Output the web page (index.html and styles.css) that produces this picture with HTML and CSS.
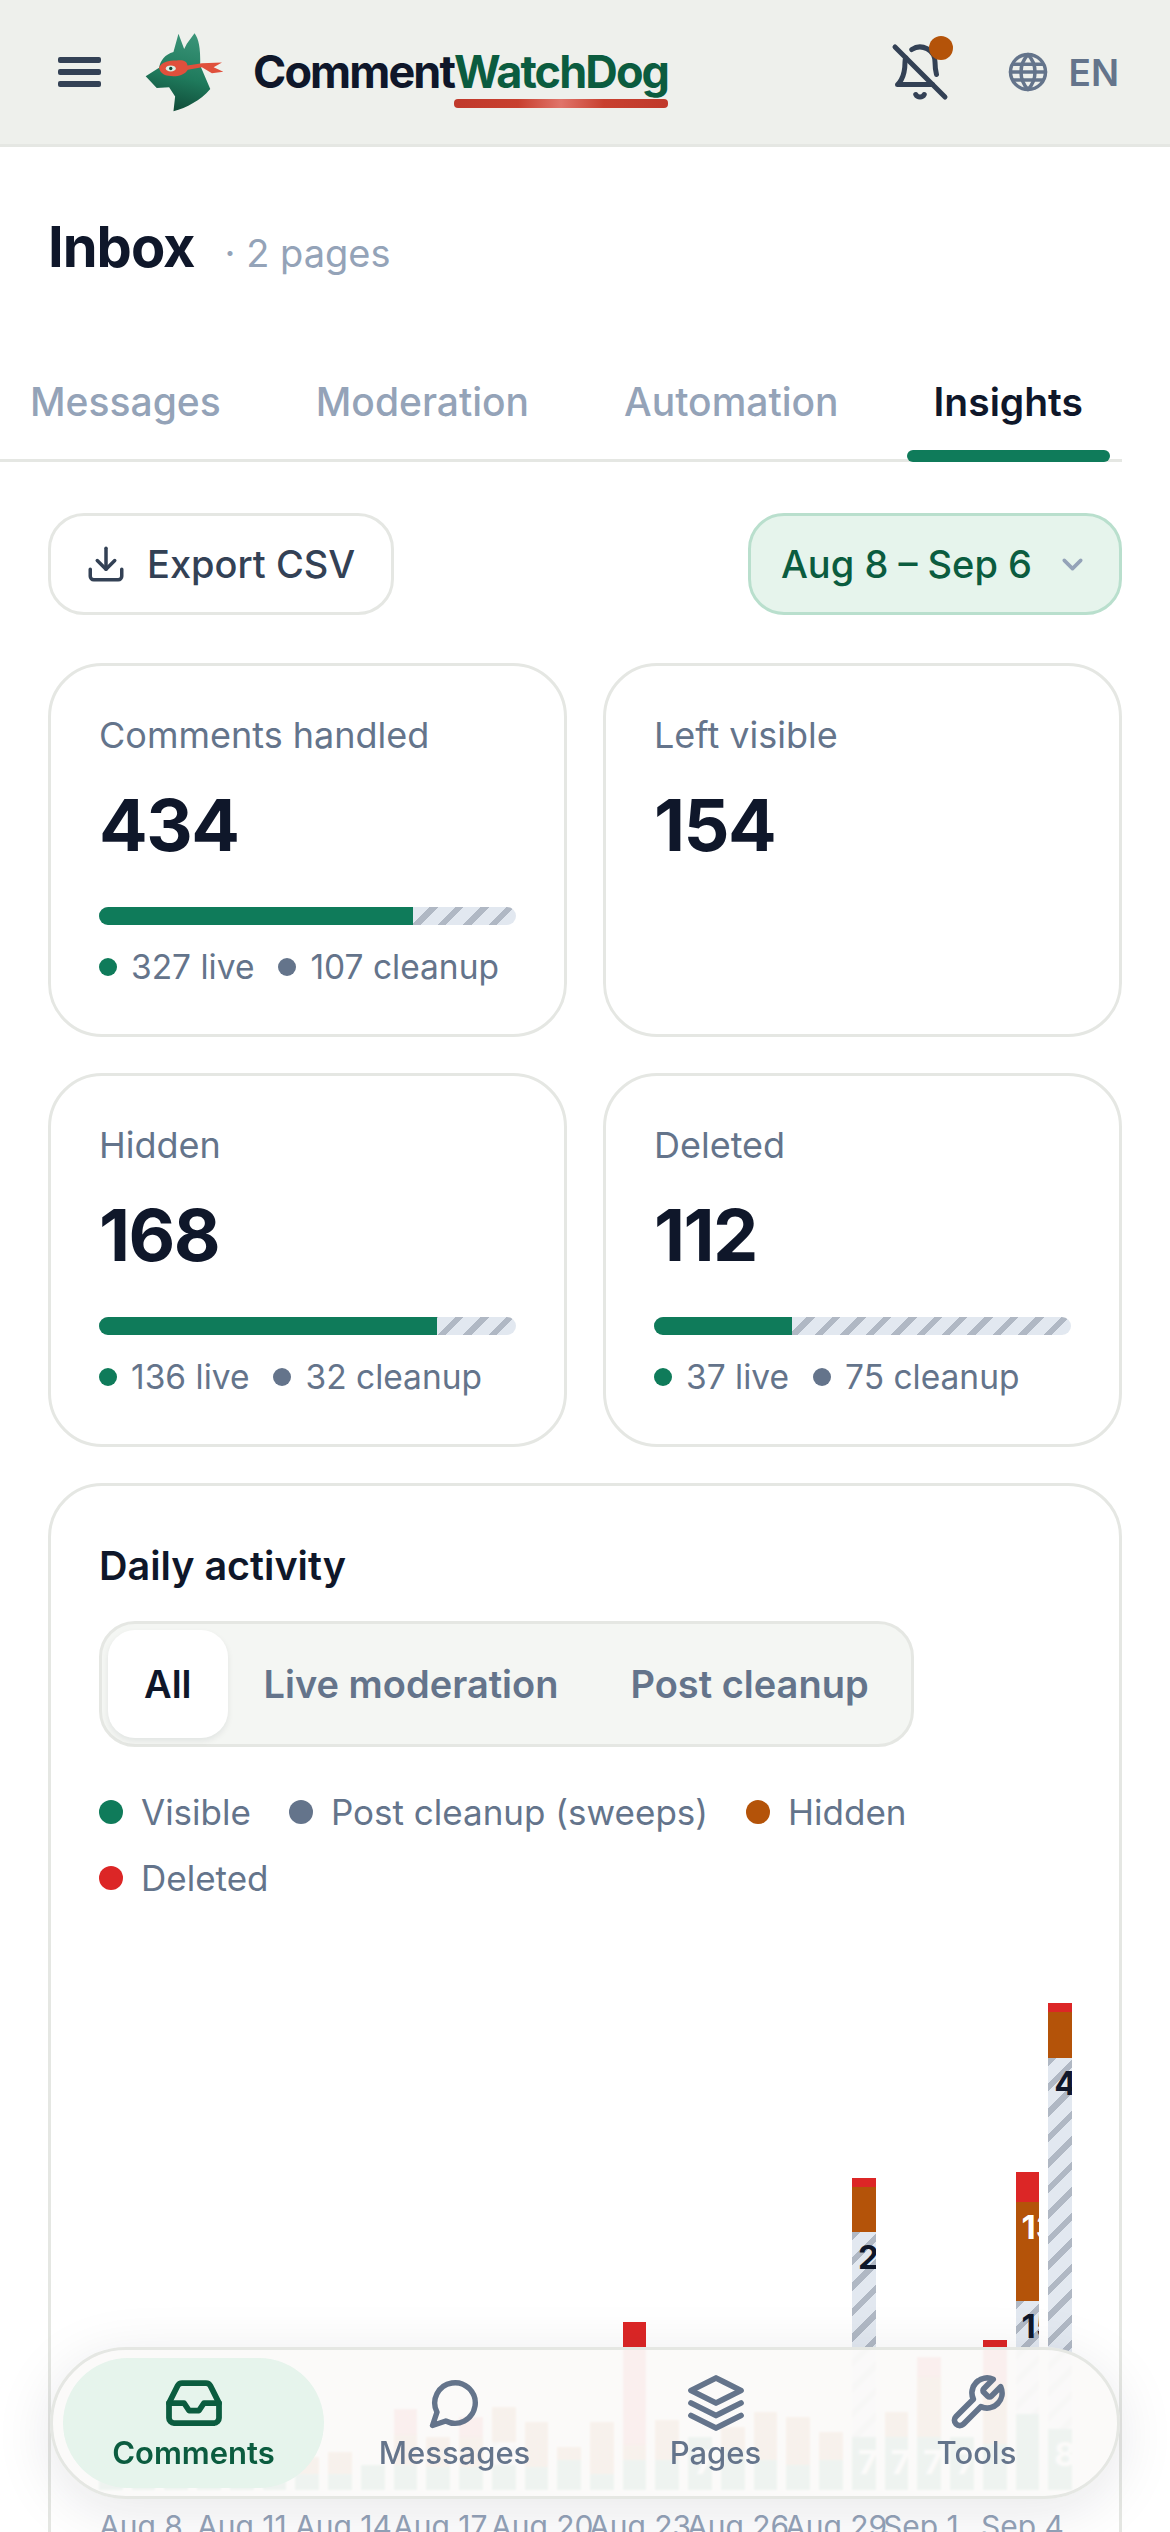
FILE: index.html
```html
<!DOCTYPE html>
<html lang="en">
<head>
    <meta charset="UTF-8">
    <title>CommentWatchDog - Inbox</title>
    <link rel="stylesheet" href="styles.css">
</head>
<body>
<header class="topbar">
    <button class="burger" aria-label="Menu"><span></span><span></span><span></span></button>
    <svg class="dog" viewBox="80 68 236 236">
        <defs>
            <linearGradient id="fur" x1="0.6" y1="0" x2="0.4" y2="1">
                <stop offset="0" stop-color="#3a9478"/>
                <stop offset="0.55" stop-color="#1f7a5c"/>
                <stop offset="1" stop-color="#0f4a37"/>
            </linearGradient>
        </defs>
        <path fill="url(#fur)" d="M165 125 L180 70 L197 116 L205 100 L228 69 C240 85 246 110 245 165 L275 235 C245 270 205 290 165 302 L170 258 L152 230 L115 232 L82 197 L122 172 C126 150 140 132 165 125Z"/>
        <path fill="#e0503c" d="M122 172 C128 155 150 150 175 150 C195 148 205 152 207 165 L250 158 L310 156 L285 170 L314 184 L280 188 L250 170 L208 178 C198 196 170 200 150 196 C135 194 125 186 122 172Z"/>
        <ellipse cx="157" cy="174" rx="15" ry="9" fill="#d9efe6"/>
        <circle cx="157" cy="174" r="5" fill="#0f4a37"/>
    </svg>
    <div class="brand">
        <span>Comment</span><span class="brand-mark">WatchDog</span>
    </div>
    <div class="top-actions">
        <div class="bell">
            <svg class="icon" viewBox="0 0 24 24"><path d="M8.7 3A6 6 0 0 1 18 8a21.3 21.3 0 0 0 .6 5"/><path d="M17 17H3s3-2 3-9a4.67 4.67 0 0 1 .3-1.7"/><path d="M10.3 21a1.94 1.94 0 0 0 3.4 0"/><path d="m2 2 20 20"/></svg>
            <i class="bell-dot"></i>
        </div>
        <div class="lang">
            <svg class="icon" viewBox="0 0 24 24"><circle cx="12" cy="12" r="10"/><path d="M12 2a14.5 14.5 0 0 0 0 20 14.5 14.5 0 0 0 0-20"/><path d="M2 12h20"/><path d="M3.5 7.5h17"/><path d="M3.5 16.5h17"/></svg>
            <span>EN</span>
        </div>
    </div>
</header>

<div class="title-row">
    <h1>Inbox</h1>
    <span class="count">· 2 pages</span>
</div>

<nav class="tabs">
    <a>Messages</a>
    <a>Moderation</a>
    <a>Automation</a>
    <a class="active">Insights</a>
</nav>

<main class="content">
    <div class="toolbar">
        <button class="export">
            <svg class="icon" viewBox="0 0 24 24"><path d="M12 3v12"/><path d="m7 10 5 5 5-5"/><path d="M3 15v4a2 2 0 0 0 2 2h14a2 2 0 0 0 2-2v-4"/></svg>
            Export CSV
        </button>
        <button class="range">
            Aug 8 – Sep 6
            <svg class="icon" viewBox="0 0 24 24"><path d="m6 9 6 6 6-6"/></svg>
        </button>
    </div>

    <div class="stats">
        <div class="stat">
            <div class="stat-label">Comments handled</div>
            <div class="stat-value">434</div>
            <div class="meter"><div class="meter-live" style="width: 75.3%"></div></div>
            <div class="split"><i class="dot green"></i>327 live<i class="dot slate"></i>107 cleanup</div>
        </div>
        <div class="stat">
            <div class="stat-label">Left visible</div>
            <div class="stat-value">154</div>
        </div>
        <div class="stat">
            <div class="stat-label">Hidden</div>
            <div class="stat-value">168</div>
            <div class="meter"><div class="meter-live" style="width: 81%"></div></div>
            <div class="split"><i class="dot green"></i>136 live<i class="dot slate"></i>32 cleanup</div>
        </div>
        <div class="stat">
            <div class="stat-label">Deleted</div>
            <div class="stat-value">112</div>
            <div class="meter"><div class="meter-live" style="width: 33%"></div></div>
            <div class="split"><i class="dot green"></i>37 live<i class="dot slate"></i>75 cleanup</div>
        </div>
    </div>

    <section class="activity">
        <h2>Daily activity</h2>
        <div class="segments">
            <button class="active">All</button>
            <button>Live moderation</button>
            <button>Post cleanup</button>
        </div>
        <div class="legend">
            <span><i class="dot green"></i>Visible</span>
            <span><i class="dot slate"></i>Post cleanup (sweeps)</span>
            <span><i class="dot orange"></i>Hidden</span>
            <span><i class="dot red"></i>Deleted</span>
        </div>
        <div class="chart">
            <div class="col"><div class="seg g" style="height: 30px"></div></div>
            <div class="col"><div class="seg g" style="height: 24px"></div></div>
            <div class="col"><div class="seg o" style="height: 12px"></div><div class="seg g" style="height: 30px"></div></div>
            <div class="col"><div class="seg g" style="height: 38px"></div></div>
            <div class="col"><div class="seg g" style="height: 24px"></div></div>
            <div class="col"><div class="seg o" style="height: 14px"></div><div class="seg g" style="height: 24px"></div></div>
            <div class="col"><div class="seg o" style="height: 17px"></div><div class="seg g" style="height: 16px"></div></div>
            <div class="col"><div class="seg o" style="height: 22px"></div><div class="seg g" style="height: 16px"></div></div>
            <div class="col"><div class="seg g" style="height: 25px"></div></div>
            <div class="col"><div class="seg r" style="height: 26px"></div><div class="seg o" style="height: 30px"></div><div class="seg g" style="height: 25px"></div></div>
            <div class="col"><div class="seg o" style="height: 30px"></div><div class="seg g" style="height: 23px"></div></div>
            <div class="col"><div class="seg r" style="height: 20px"></div><div class="seg o" style="height: 30px"></div><div class="seg g" style="height: 23px"></div></div>
            <div class="col"><div class="seg o" style="height: 35px"></div><div class="seg s" style="height: 23px"></div><div class="seg g" style="height: 25px"></div></div>
            <div class="col"><div class="seg o" style="height: 45px"></div><div class="seg g" style="height: 23px"></div></div>
            <div class="col"><div class="seg o" style="height: 13px"></div><div class="seg g" style="height: 30px"></div></div>
            <div class="col"><div class="seg o" style="height: 52px"></div><div class="seg g" style="height: 16px"></div></div>
            <div class="col"><div class="seg r" style="height: 123px"></div><div class="seg o" style="height: 15px"></div><div class="seg g" style="height: 30px"></div></div>
            <div class="col"><div class="seg o" style="height: 40px"></div><div class="seg g" style="height: 30px"></div></div>
            <div class="col"><div class="seg g" style="height: 53px">7</div></div>
            <div class="col"><div class="seg o" style="height: 23px"></div><div class="seg g" style="height: 40px"></div></div>
            <div class="col"><div class="seg o" style="height: 48px"></div><div class="seg g" style="height: 30px"></div></div>
            <div class="col"><div class="seg o" style="height: 48px"></div><div class="seg g" style="height: 25px"></div></div>
            <div class="col"><div class="seg o" style="height: 28px"></div><div class="seg g" style="height: 30px"></div></div>
            <div class="col"><div class="seg r" style="height: 9px"></div><div class="seg o" style="height: 45px"></div><div class="seg s" style="height: 205px">28</div><div class="seg g" style="height: 53px">7</div></div>
            <div class="col"><div class="seg o" style="height: 25px"></div><div class="seg g" style="height: 53px">7</div></div>
            <div class="col"><div class="seg r" style="height: 20px"></div><div class="seg o" style="height: 60px"></div><div class="seg g" style="height: 53px">7</div></div>
            <div class="col"><div class="seg g" style="height: 53px">7</div></div>
            <div class="col"><div class="seg r" style="height: 44px"></div><div class="seg o" style="height: 60px"></div><div class="seg g" style="height: 46px"></div></div>
            <div class="col"><div class="seg r" style="height: 30px"></div><div class="seg o" style="height: 99px">13</div><div class="seg s" style="height: 113px">15</div><div class="seg g" style="height: 76px"></div></div>
            <div class="col"><div class="seg r" style="height: 9px"></div><div class="seg o" style="height: 46px"></div><div class="seg s" style="height: 371px">49</div><div class="seg g" style="height: 61px">8</div></div>
        </div>
        <div class="axis">
            <span>Aug 8</span><span>Aug 11</span><span>Aug 14</span><span>Aug 17</span><span>Aug 20</span>
            <span>Aug 23</span><span>Aug 26</span><span>Aug 29</span><span>Sep 1</span><span>Sep 4</span>
        </div>
    </section>
</main>

<nav class="dock">
    <a class="active">
        <svg class="icon" viewBox="0 0 24 24"><polyline points="22 12 16 12 14 15 10 15 8 12 2 12"/><path d="M5.45 5.11 2 12v6a2 2 0 0 0 2 2h16a2 2 0 0 0 2-2v-6l-3.45-6.89A2 2 0 0 0 16.76 4H7.24a2 2 0 0 0-1.79 1.11z"/></svg>
        Comments
    </a>
    <a>
        <svg class="icon icon-small" viewBox="0 0 24 24"><path d="M7.9 20A9 9 0 1 0 4 16.1L2 22Z"/></svg>
        Messages
    </a>
    <a>
        <svg class="icon" viewBox="0 0 24 24"><polygon points="12 2 2 7 12 12 22 7 12 2"/><polyline points="2 17 12 22 22 17"/><polyline points="2 12 12 17 22 12"/></svg>
        Pages
    </a>
    <a>
        <svg class="icon" viewBox="0 0 24 24"><path d="M14.7 6.3a1 1 0 0 0 0 1.4l1.6 1.6a1 1 0 0 0 1.4 0l3.77-3.77a6 6 0 0 1-7.94 7.94l-6.91 6.91a2.12 2.12 0 0 1-3-3l6.91-6.91a6 6 0 0 1 7.94-7.94l-3.76 3.76z"/></svg>
        Tools
    </a>
</nav>
</body>
</html>
```

FILE: styles.css
```css
html, body {
    height: 2532px;
    overflow: hidden;
}

body {
    margin: 0;
    background: #fff;
    color: #0f172a;
    font-family: Inter, "Noto Sans", sans-serif;
}

button {
    font-family: inherit;
    cursor: pointer;
}

.icon {
    fill: none;
    stroke: currentColor;
    stroke-width: 2;
    stroke-linecap: round;
    stroke-linejoin: round;
}

.dot {
    display: inline-block;
    flex: none;
    border-radius: 50%;
}

.green { background: #0f7b5a; }
.slate { background: #64748b; }
.orange { background: #b45309; }
.red { background: #dc2626; }

/* top bar */
.topbar {
    display: flex;
    align-items: center;
    height: 144px;
    padding: 0 51px 0 58px;
    background: #eef0ec;
    border-bottom: 3px solid #e5e7e3;
}

.burger {
    display: flex;
    flex-direction: column;
    gap: 6px;
    width: 43px;
    padding: 0;
    border: 0;
    background: none;
}

.burger span {
    height: 6px;
    border-radius: 2px;
    background: #334155;
}

.dog {
    width: 79px;
    height: 79px;
    margin-left: 44px;
}

.brand {
    margin-left: 29px;
    position: relative;
    font-size: 45px;
    font-weight: 700;
    letter-spacing: -1.9px;
    line-height: 54px;
}

.brand-mark {
    color: #0b5c3f;
    display: inline-block;
    position: relative;
}

.brand-mark::after {
    content: "";
    position: absolute;
    left: 0;
    right: 0;
    bottom: -9px;
    height: 9px;
    border-radius: 4px;
    background: linear-gradient(90deg, #c0392b 0%, #c8402f 30%, #e0746a 50%, #c8402f 70%, #c0392b 100%);
}

.top-actions {
    display: flex;
    align-items: center;
    margin-left: auto;
}

.bell {
    position: relative;
    width: 60px;
    height: 60px;
    color: #334155;
}

.bell .icon {
    width: 60px;
    height: 60px;
}

.bell-dot {
    position: absolute;
    top: -6px;
    right: -3px;
    width: 24px;
    height: 24px;
    border-radius: 50%;
    background: #b45309;
}

.lang {
    display: flex;
    align-items: center;
    gap: 20px;
    margin-left: 57px;
    color: #64748b;
    font-size: 37px;
    font-weight: 600;
}

.lang .icon {
    width: 42px;
    height: 42px;
}

/* page title */
.title-row {
    display: flex;
    align-items: baseline;
    gap: 30px;
    padding: 64px 48px 0;
}

h1 {
    margin: 0;
    font-size: 56px;
    font-weight: 700;
    letter-spacing: -1px;
    line-height: 72px;
}

.count {
    font-size: 38px;
    color: #94a3b8;
}

/* tabs */
.tabs {
    display: flex;
    gap: 41px;
    width: 1122px;
    box-sizing: border-box;
    padding-left: 3px;
    margin-top: 92px;
    border-bottom: 3px solid #e5e7e3;
}

.tabs a {
    position: relative;
    padding: 0 27px 30px;
    font-size: 39px;
    font-weight: 500;
    line-height: 54px;
    color: #94a3b8;
}

.tabs a.active {
    color: #0f172a;
    font-weight: 600;
}

.tabs a.active::after {
    content: "";
    position: absolute;
    left: 0;
    right: 0;
    bottom: -3px;
    height: 12px;
    border-radius: 6px;
    background: #0f7b5a;
}

.content {
    padding: 0 48px;
}

/* toolbar */
.toolbar {
    display: flex;
    justify-content: space-between;
    margin-top: 51px;
}

.toolbar button {
    display: flex;
    align-items: center;
    height: 102px;
    font-size: 38px;
    font-weight: 500;
    border-radius: 36px;
}

.export {
    gap: 20px;
    padding: 0 36px 0 34px;
    border: 3px solid #e5e7e3;
    background: #fff;
    color: #334155;
}

.export .icon {
    width: 42px;
    height: 42px;
}

.range {
    gap: 24px;
    padding: 0 30px;
    border: 3px solid #b9dfcd;
    background: #e6f4ec;
    color: #0b5c3f;
}

.range .icon {
    width: 33px;
    height: 33px;
    stroke-width: 2.6;
    color: #94a3b8;
}

/* stat cards */
.stats {
    display: grid;
    grid-template-columns: 1fr 1fr;
    gap: 36px;
    margin-top: 48px;
}

.stat {
    height: 374px;
    box-sizing: border-box;
    padding: 45px 48px;
    border: 3px solid #e5e7e3;
    border-radius: 54px;
}

.stat-label {
    font-size: 36px;
    line-height: 48px;
    color: #64748b;
}

.stat-value {
    margin-top: 24px;
    font-size: 72px;
    font-weight: 700;
    letter-spacing: -1.5px;
    line-height: 84px;
}

.meter {
    height: 18px;
    margin-top: 40px;
    border-radius: 9px;
    overflow: hidden;
    background: repeating-linear-gradient(135deg, #b0b8c4 0 6px, #e2e8f0 6px 18px);
}

.meter-live {
    height: 100%;
    background: #0f7b5a;
}

.split {
    display: flex;
    align-items: center;
    margin-top: 18px;
    font-size: 33.5px;
    line-height: 48px;
    color: #64748b;
}

.split .dot {
    width: 18px;
    height: 18px;
    margin-right: 14px;
}

.split .slate {
    margin-left: 24px;
}

/* daily activity card */
.activity {
    margin-top: 36px;
    height: 1300px;
    box-sizing: border-box;
    padding: 53px 48px;
    border: 3px solid #e5e7e3;
    border-radius: 54px;
}

h2 {
    margin: 0;
    font-size: 39.5px;
    font-weight: 600;
    line-height: 54px;
}

.segments {
    display: inline-flex;
    margin-top: 28px;
    padding: 6px;
    border: 3px solid #e5e7e3;
    border-radius: 36px;
    background: #f4f6f3;
}

.segments button {
    height: 108px;
    padding: 0 36px;
    border: 0;
    border-radius: 27px;
    background: none;
    color: #64748b;
    font-size: 38px;
    font-weight: 600;
}

.segments button.active {
    background: #fff;
    color: #0f172a;
    box-shadow: 0 3px 6px rgba(15, 23, 42, 0.08);
}

.legend {
    display: flex;
    flex-wrap: wrap;
    gap: 18px 38px;
    margin-top: 41px;
    font-size: 35px;
    line-height: 48px;
    color: #64748b;
}

.legend span {
    display: flex;
    align-items: center;
    gap: 18px;
}

.legend .dot {
    width: 24px;
    height: 24px;
}

.chart {
    display: flex;
    align-items: flex-end;
    gap: 9px;
    height: 588px;
    margin-right: -1px;
}

.col {
    flex: 1;
    min-width: 0;
}

.seg {
    box-sizing: border-box;
    padding-left: 6px;
    overflow: hidden;
    font-size: 33px;
    font-weight: 700;
    line-height: 50px;
    color: #fff;
}

.seg.g { background: #0f7b5a; }
.seg.o { background: #b45309; }
.seg.r { background: #dc2626; }

.seg.s {
    color: #0f172a;
    background: repeating-linear-gradient(135deg, #b0b8c4 0 6px, #e2e8f0 6px 18px);
}

.axis {
    display: flex;
    margin-top: 18px;
    font-size: 30px;
    line-height: 36px;
    color: #94a3b8;
}

.axis span {
    flex: none;
    width: 98px;
    white-space: nowrap;
}

/* bottom navigation */
.dock {
    position: fixed;
    left: 50px;
    right: 50px;
    top: 2347px;
    height: 152px;
    box-sizing: border-box;
    display: flex;
    padding: 8px 10px;
    border: 3px solid #e5e7e3;
    border-radius: 76px;
    background: rgba(251, 250, 249, 0.95);
    backdrop-filter: blur(1px);
    box-shadow: 0 12px 60px rgba(15, 23, 42, 0.1);
}

.dock a {
    flex: 1;
    display: flex;
    flex-direction: column;
    align-items: center;
    gap: 1px;
    padding-top: 15px;
    border-radius: 68px;
    font-size: 31px;
    font-weight: 500;
    color: #64748b;
}

.dock a .icon {
    width: 60px;
    height: 60px;
    stroke-width: 2.3;
}

.dock a .icon-small {
    width: 54px;
    height: 54px;
    margin: 3px 0;
    stroke-width: 2.4;
}

.dock a.active {
    background: #e6f4ec;
    color: #0b5c3f;
    font-weight: 600;
}
```
